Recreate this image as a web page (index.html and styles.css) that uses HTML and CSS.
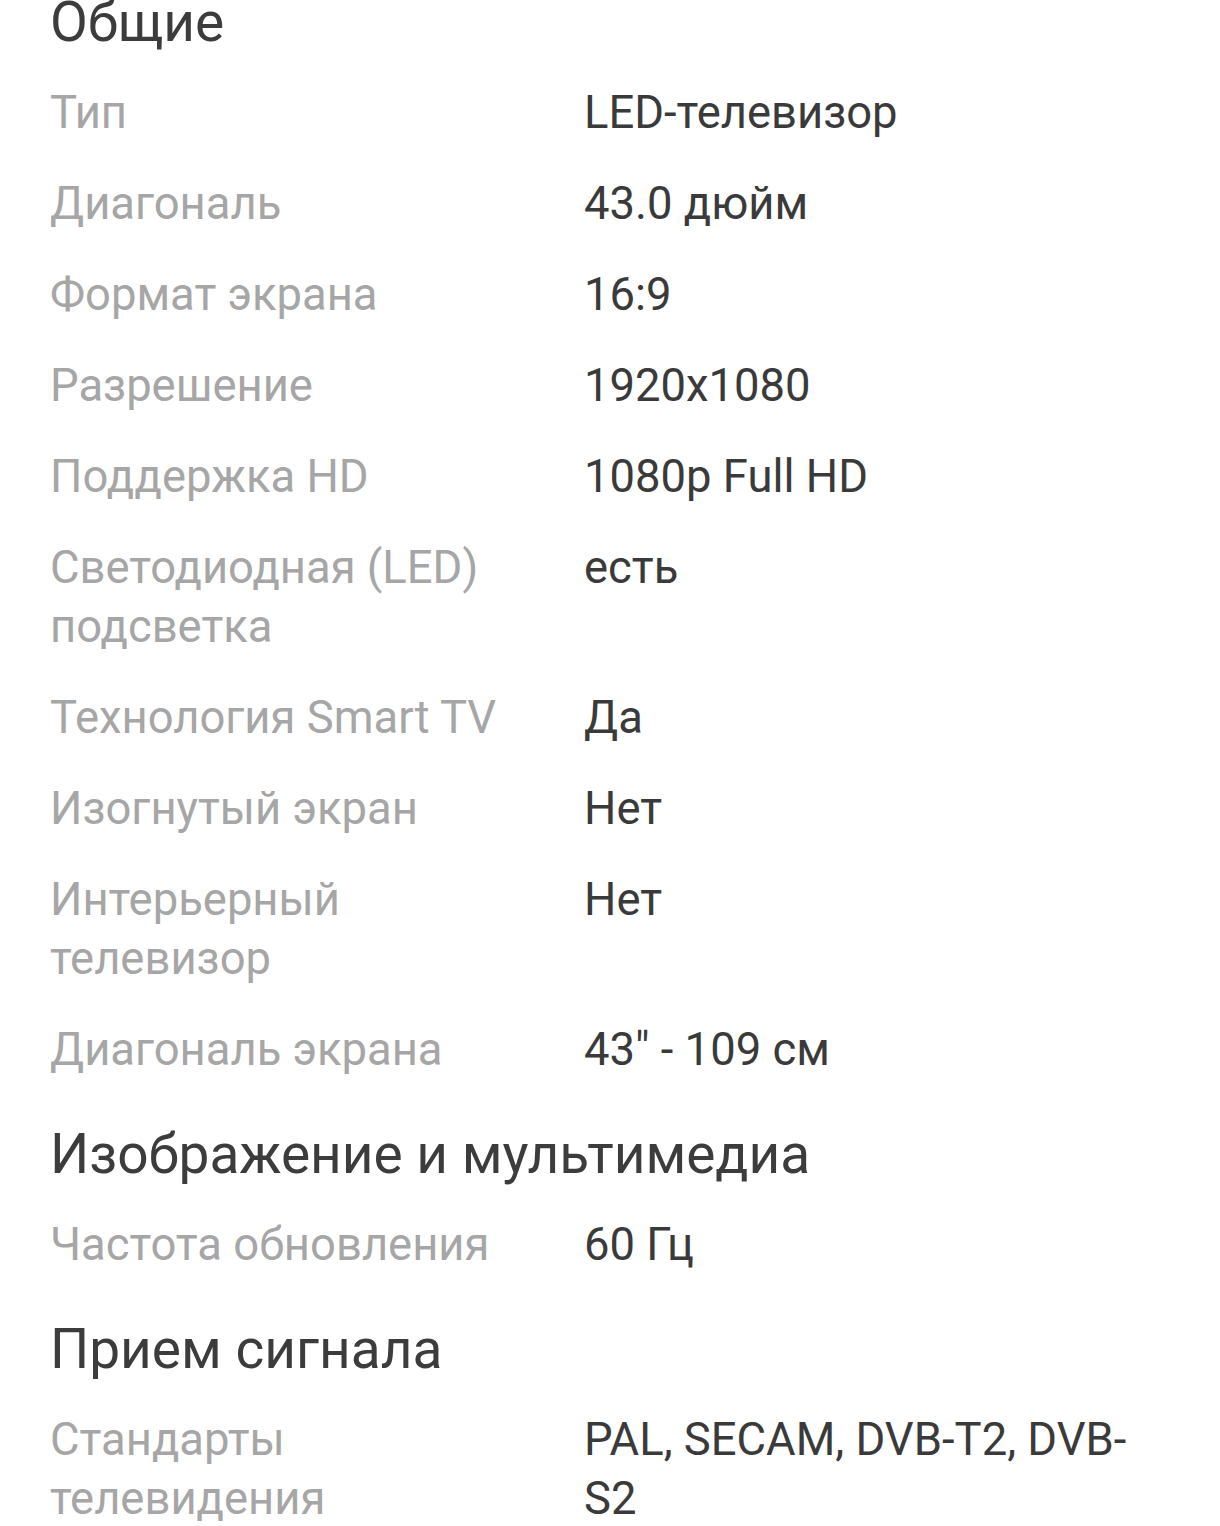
FILE: index.html
```html
<!DOCTYPE html>
<html lang="ru">
<head>
    <meta charset="UTF-8">
    <meta name="viewport" content="width=device-width, initial-scale=1.0">
    <title>Характеристики</title>
    <link rel="stylesheet" href="styles.css">
</head>
<body>

    <div class="specs">
        <h2 class="specs-title">Общие</h2>
        <div class="spec-row">
            <div class="spec-name">Тип</div>
            <div class="spec-value">LED-телевизор</div>
        </div>
        <div class="spec-row">
            <div class="spec-name">Диагональ</div>
            <div class="spec-value">43.0 дюйм</div>
        </div>
        <div class="spec-row">
            <div class="spec-name">Формат экрана</div>
            <div class="spec-value">16:9</div>
        </div>
        <div class="spec-row">
            <div class="spec-name">Разрешение</div>
            <div class="spec-value">1920x1080</div>
        </div>
        <div class="spec-row">
            <div class="spec-name">Поддержка HD</div>
            <div class="spec-value">1080p Full HD</div>
        </div>
        <div class="spec-row">
            <div class="spec-name">Светодиодная (LED) подсветка</div>
            <div class="spec-value">есть</div>
        </div>
        <div class="spec-row">
            <div class="spec-name">Технология Smart TV</div>
            <div class="spec-value">Да</div>
        </div>
        <div class="spec-row">
            <div class="spec-name">Изогнутый экран</div>
            <div class="spec-value">Нет</div>
        </div>
        <div class="spec-row">
            <div class="spec-name">Интерьерный телевизор</div>
            <div class="spec-value">Нет</div>
        </div>
        <div class="spec-row">
            <div class="spec-name">Диагональ экрана</div>
            <div class="spec-value">43" - 109 см</div>
        </div>

        <h2 class="specs-title">Изображение и мультимедиа</h2>
        <div class="spec-row">
            <div class="spec-name">Частота обновления</div>
            <div class="spec-value">60 Гц</div>
        </div>

        <h2 class="specs-title">Прием сигнала</h2>
        <div class="spec-row">
            <div class="spec-name">Стандарты телевидения</div>
            <div class="spec-value">PAL, SECAM, DVB-T2, DVB-S2</div>
        </div>
    </div>

</body>
</html>
```

FILE: styles.css
```css
* {
    box-sizing: border-box;
    margin: 0;
    padding: 0;
}
body {
    background-color: #fff;
    font-family: Roboto, "Noto Sans", sans-serif;
    overflow: hidden;
}
.specs {
    margin-top: -12px;
    padding: 0 50px;
}
.specs-title {
    font-size: 55px;
    font-weight: normal;
    line-height: 68px;
    color: #3c3c3c;
    margin: 25px 0 11px;
}
.specs-title:first-child {
    margin-top: 0;
}
.spec-row {
    display: grid;
    grid-template-columns: 484px 1fr;
    column-gap: 50px;
    padding: 16px 0;
    font-size: 45.4px;
    line-height: 59px;
}
.spec-name {
    color: #a6a6a6;
}
.spec-value {
    color: #3a3a3a;
}
```
